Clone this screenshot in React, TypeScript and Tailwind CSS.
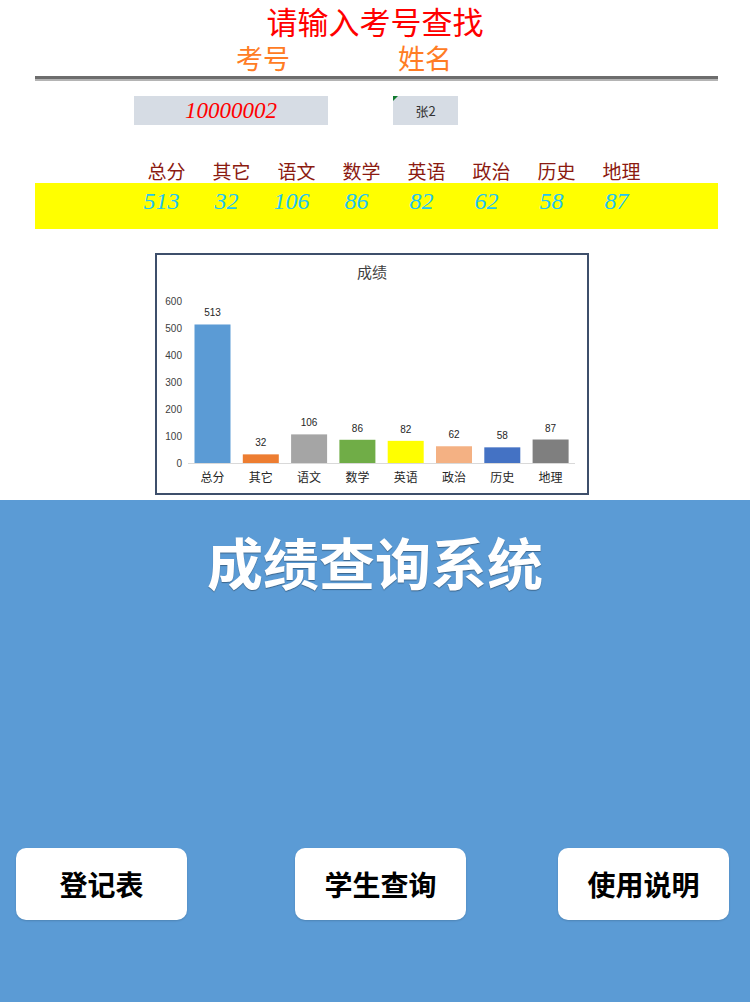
const subjects = [
  { name: "总分", score: 513, color: "#5b9bd5" },
  { name: "其它", score: 32, color: "#ed7d31" },
  { name: "语文", score: 106, color: "#a5a5a5" },
  { name: "数学", score: 86, color: "#70ad47" },
  { name: "英语", score: 82, color: "#ffff00" },
  { name: "政治", score: 62, color: "#f4b183" },
  { name: "历史", score: 58, color: "#4472c4" },
  { name: "地理", score: 87, color: "#7f7f7f" },
];

const cjk = "font-['Noto_Sans_CJK_SC',sans-serif]";
const serif = "font-['Liberation_Serif',serif]";

const ScoreChart = () => {
  const base = 208;
  const k = 0.27;
  return (
    <svg width="430" height="238" viewBox="0 0 430 238" className="block">
      <text x="215" y="23" textAnchor="middle" fontSize="15" fill="#404040" fontFamily="Noto Sans CJK SC, sans-serif">
        成绩
      </text>
      {[0, 100, 200, 300, 400, 500, 600].map((v) => (
        <text key={v} x="25" y={base - v * k + 4} textAnchor="end" fontSize="10" fill="#404040" fontFamily="Liberation Sans, sans-serif">
          {v}
        </text>
      ))}
      <line x1="31" y1={base + 0.5} x2="418" y2={base + 0.5} stroke="#d9d9d9" strokeWidth="1" />
      {subjects.map((s, i) => {
        const cx = 55.5 + i * 48.3;
        const h = s.score * k;
        return (
          <g key={s.name}>
            <rect x={cx - 18} y={base - h} width="36" height={h} fill={s.color} />
            <text x={cx} y={base - h - 8} textAnchor="middle" fontSize="10" fill="#262626" fontFamily="Liberation Sans, sans-serif">
              {s.score}
            </text>
            <text x={cx} y={base + 19} textAnchor="middle" fontSize="12" fill="#262626" fontFamily="Noto Sans CJK SC, sans-serif">
              {s.name}
            </text>
          </g>
        );
      })}
    </svg>
  );
};

export default function App() {
  return (
    <div className={`w-[750px] h-[1002px] flex flex-col bg-white ${cjk}`}>
      {/* Query sheet */}
      <div className="h-[500px] flex flex-col">
        <div className="h-[40px] pt-[1px] text-center text-[31px] leading-[40px] text-[#ff0000]">
          请输入考号查找
        </div>
        <div className="h-[36px] flex text-[27px] leading-[36px] text-[#ff7c24]">
          <span className="ml-[236px]">考号</span>
          <span className="ml-[108px]">姓名</span>
        </div>
        <div className="ml-[35px] w-[683px] h-[3px] bg-[#6d6d6d]" />
        <div className="ml-[35px] w-[683px] h-[2px] bg-[#b4b4b4]" />

        <div className="mt-[15px] h-[29px] flex">
          <div className={`ml-[134px] w-[194px] bg-[#d6dce4] text-center text-[23px] leading-[29px] italic text-[#ff0000] ${serif}`}>
            10000002
          </div>
          <div className="relative ml-[65px] w-[65px] bg-[#d6dce4] text-center text-[13px] leading-[29px] text-[#333333]">
            <span className="absolute left-0 top-0 w-0 h-0 border-t-[5px] border-r-[5px] border-t-[#117a2e] border-r-transparent" />
            张2
          </div>
        </div>

        <div className="mt-[33px] h-[25px] grid grid-cols-[repeat(8,65px)] pl-[134px] text-[19px] leading-[25px] text-[#8b1a10]">
          {subjects.map((s) => (
            <span key={s.name} className="text-center">{s.name}</span>
          ))}
        </div>
        <div className="ml-[35px] w-[683px] h-[46px] bg-[#ffff00] grid grid-cols-[repeat(8,65px)] pl-[100px]">
          {subjects.map((s) => (
            <span key={s.name} className={`pr-[12px] pt-[3px] text-center text-[24px] leading-[30px] italic text-[#22c4f5] ${serif}`}>
              {s.score}
            </span>
          ))}
        </div>

        <div className="mt-[24px] ml-[155px] w-[434px] h-[242px] border-2 border-[#3e4f6b]">
          <ScoreChart />
        </div>
      </div>

      {/* Menu */}
      <div className="flex-1 bg-[#5b9bd5] flex flex-col">
        <div className="mt-[27px] text-center text-[56px] leading-[68px] font-bold text-white [text-shadow:0_1px_1px_rgba(0,0,0,0.35)]">
          成绩查询系统
        </div>
        <div className="mt-[253px] flex">
          {["登记表", "学生查询", "使用说明"].map((label, i) => (
            <button
              key={label}
              className={`${i === 0 ? "ml-[16px]" : i === 1 ? "ml-[108px]" : "ml-[92px]"} w-[171px] h-[72px] rounded-[10px] bg-white text-[28px] font-bold text-black shadow-[0_1px_2px_rgba(0,0,0,0.15)]`}
            >
              {label}
            </button>
          ))}
        </div>
      </div>
    </div>
  );
}
